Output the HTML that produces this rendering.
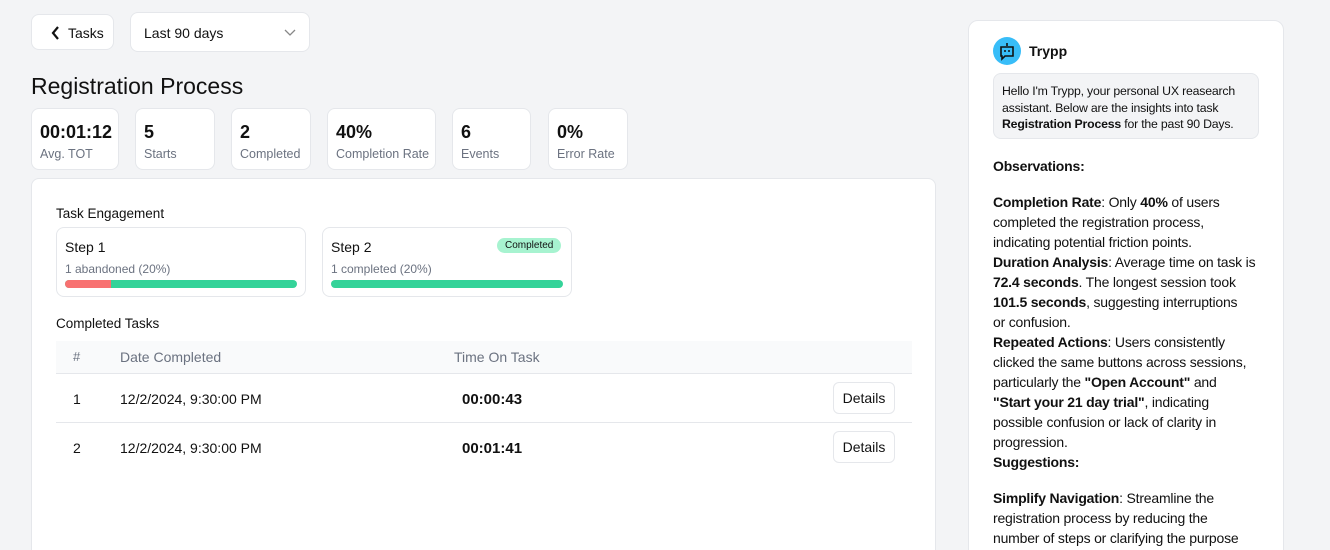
<!DOCTYPE html><html><head><style>
*{box-sizing:border-box;margin:0;padding:0}
html,body{width:1330px;height:550px;overflow:hidden}
body{background:#f3f4f6;font-family:"Liberation Sans",sans-serif;color:#111;position:relative}
.box{position:absolute;background:#fff;border:1px solid #e5e7eb;border-radius:8px}
.stat .v{position:absolute;left:8px;top:13px;font-size:18px;font-weight:bold}
.stat .l{position:absolute;left:8px;top:38px;font-size:12.5px;color:#6b7280}
.t{position:absolute;font-size:14px}
.bar{position:absolute;height:8px;border-radius:4px;background:#34d399;overflow:hidden}
.btn{position:absolute;left:801px;width:62px;height:32px;border:1px solid #e5e7eb;border-radius:6px;font-size:14px;text-align:center;line-height:30px;background:#fff}
.side{position:absolute;left:993px;width:280px;font-size:14px;line-height:20px;letter-spacing:-0.2px;white-space:nowrap}
</style></head><body>
<div class="box" style="left:31px;top:14px;width:83px;height:36px"><svg style="position:absolute;left:19px;top:11px" width="10" height="14" viewBox="0 0 10 14"><path d="M7 1 L2 7 L7 13" fill="none" stroke="#111" stroke-width="2.2"/></svg><span class="t" style="left:36px;top:10px">Tasks</span></div>
<div class="box" style="left:130px;top:12px;width:180px;height:40px"><span class="t" style="left:13px;top:12px">Last 90 days</span><svg style="position:absolute;left:153px;top:16px" width="12" height="8"><path d="M1 1 L6 6 L11 1" fill="none" stroke="#888" stroke-width="1.3"/></svg></div>
<div style="position:absolute;left:31px;top:73px;font-size:23px">Registration Process</div>
<div class="box stat" style="left:31px;top:108px;width:88px;height:62px"><div class="v">00:01:12</div><div class="l">Avg. TOT</div></div>
<div class="box stat" style="left:135px;top:108px;width:80px;height:62px"><div class="v">5</div><div class="l">Starts</div></div>
<div class="box stat" style="left:231px;top:108px;width:80px;height:62px"><div class="v">2</div><div class="l">Completed</div></div>
<div class="box stat" style="left:327px;top:108px;width:109px;height:62px"><div class="v">40%</div><div class="l">Completion Rate</div></div>
<div class="box stat" style="left:452px;top:108px;width:79px;height:62px"><div class="v">6</div><div class="l">Events</div></div>
<div class="box stat" style="left:548px;top:108px;width:80px;height:62px"><div class="v">0%</div><div class="l">Error Rate</div></div>
<div class="box" style="left:31px;top:178px;width:905px;height:380px">
<div class="t" style="left:24px;top:27px;font-size:13.5px">Task Engagement</div>
<div class="box" style="left:24px;top:48px;width:250px;height:70px"><div class="t" style="left:8px;top:11px">Step 1</div><div class="t" style="left:8px;top:34px;font-size:12px;color:#6b7280">1 abandoned (20%)</div><div class="bar" style="left:8px;top:52px;width:232px"><div style="width:46px;height:8px;background:#f87171"></div></div></div>
<div class="box" style="left:290px;top:48px;width:250px;height:70px"><div class="t" style="left:8px;top:11px">Step 2</div><div style="position:absolute;left:174px;top:10px;background:#a7f3d0;border-radius:9px;font-size:10px;padding:2px 8px">Completed</div><div class="t" style="left:8px;top:34px;font-size:12px;color:#6b7280">1 completed (20%)</div><div class="bar" style="left:8px;top:52px;width:232px"></div></div>
<div class="t" style="left:24px;top:137px;font-size:13.5px">Completed Tasks</div>
<div style="position:absolute;left:24px;top:162px;width:856px;height:33px;background:#f9fafb;border-bottom:1px solid #e5e7eb"></div>
<div class="t" style="left:41px;top:170px;color:#6b7280;font-size:13px">#</div>
<div class="t" style="left:88px;top:170px;color:#6b7280">Date Completed</div>
<div class="t" style="left:422px;top:170px;color:#6b7280">Time On Task</div>
<div class="t" style="left:41px;top:212px">1</div><div class="t" style="left:88px;top:212px">12/2/2024, 9:30:00 PM</div><div class="t" style="left:430px;top:212px;font-weight:bold;font-size:15px">00:00:43</div><div class="btn" style="top:203px">Details</div>
<div style="position:absolute;left:24px;top:243px;width:856px;height:1px;background:#e5e7eb"></div>
<div class="t" style="left:41px;top:261px">2</div><div class="t" style="left:88px;top:261px">12/2/2024, 9:30:00 PM</div><div class="t" style="left:430px;top:261px;font-weight:bold;font-size:15px">00:01:41</div><div class="btn" style="top:252px">Details</div>
</div>
<div class="box" style="left:968px;top:20px;width:316px;height:540px;border-radius:10px"></div>
<div style="position:absolute;left:993px;top:37px;width:28px;height:28px;border-radius:50%;background:#38bdf8"></div>
<svg style="position:absolute;left:998px;top:41px" width="18" height="20" viewBox="0 0 18 20"><path d="M9 2v3M3 6h12v9H7l-3 3v-3H3z" fill="none" stroke="#111" stroke-width="1.6"/><circle cx="7" cy="10" r="1" fill="#111"/><circle cx="11" cy="10" r="1" fill="#111"/></svg>
<div class="t" style="left:1029px;top:43px;font-weight:bold">Trypp</div>
<div style="position:absolute;left:993px;top:73px;width:266px;height:66px;background:#f3f4f6;border:1px solid #e5e7eb;border-radius:8px;padding:9px 8px;font-size:12.3px;line-height:16.5px;letter-spacing:-0.2px">Hello I'm Trypp, your personal UX reasearch assistant. Below are the insights into task <b>Registration Process</b> for the past 90 Days.</div>
<div class="side" style="top:156px"><b>Observations:</b><div style="height:16px"></div><b>Completion Rate</b>: Only <b>40%</b> of users<br>completed the registration process,<br>indicating potential friction points.<br><b>Duration Analysis</b>: Average time on task is<br><b>72.4 seconds</b>. The longest session took<br><b>101.5 seconds</b>, suggesting interruptions<br>or confusion.<br><b>Repeated Actions</b>: Users consistently<br>clicked the same buttons across sessions,<br>particularly the <b>"Open Account"</b> and<br><b>"Start your 21 day trial"</b>, indicating<br>possible confusion or lack of clarity in<br>progression.<br><b>Suggestions:</b><div style="height:16px"></div><b>Simplify Navigation</b>: Streamline the<br>registration process by reducing the<br>number of steps or clarifying the purpose</div>
</body></html>
